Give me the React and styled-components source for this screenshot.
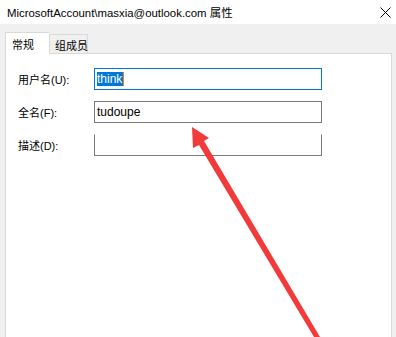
import styled, { createGlobalStyle } from "styled-components";

const GlobalStyle = createGlobalStyle`
  html, body {
    margin: 0;
    padding: 0;
    width: 396px;
    height: 337px;
    overflow: hidden;
    background: #f0f0f0;
    font-family: "Liberation Sans", "Noto Sans CJK SC", sans-serif;
    font-size: 12px;
    color: #000;
  }
`;

const Window = styled.div`
  position: relative;
  display: flex;
  flex-direction: column;
  width: 396px;
  height: 337px;
  overflow: hidden;
`;

const TitleBar = styled.div`
  display: flex;
  align-items: center;
  justify-content: space-between;
  height: 24px;
  padding: 0 4px 0 7px;
  background: #fff;
`;

const TitleText = styled.div`
  font-size: 11.4px;
  color: #000;
  white-space: nowrap;
`;

const Close = styled.div`
  width: 14px;
  height: 14px;
  display: flex;
  align-items: center;
  justify-content: center;
`;

const Body = styled.div`
  flex: 1;
  display: flex;
  flex-direction: column;
  padding: 8px 4px 0 5px;
`;

const Tabs = styled.div`
  display: flex;
  align-items: flex-end;
  height: 21px;
`;

const Tab = styled.div`
  box-sizing: border-box;
  height: ${(p) => (p.$active ? "22px" : "19px")};
  width: ${(p) => p.$w}px;
  padding: ${(p) => (p.$active ? "3px 0 0 6px" : "2px 0 0 5px")};
  background: ${(p) => (p.$active ? "#fff" : "#f0f0f0")};
  border: 1px solid #d9d9d9;
  border-bottom: none;
  border-right: ${(p) => (p.$active ? "none" : "1px solid #d9d9d9")};
  margin-bottom: ${(p) => (p.$active ? "-1px" : "0")};
  position: relative;
  z-index: ${(p) => (p.$active ? 1 : 0)};
  font-size: 11px;
  white-space: nowrap;
`;

const Panel = styled.div`
  flex: 1;
  background: #fff;
  border: 1px solid #d9d9d9;
  border-bottom: none;
  padding: 14px 0 0 12px;
  display: flex;
  flex-direction: column;
  gap: 11px;
`;

const Row = styled.div`
  display: flex;
  align-items: center;
`;

const Label = styled.div`
  width: 76px;
  font-size: 11px;
`;

const Field = styled.div`
  box-sizing: border-box;
  width: 228px;
  height: 22px;
  border: 1px solid ${(p) => (p.$focus ? "#0078d7" : "#7a7a7a")};
  border-top-color: ${(p) => (p.$noTop ? "transparent" : p.$focus ? "#0078d7" : "#7a7a7a")};
  padding: 0 2px;
  display: flex;
  align-items: center;
  font-size: 12px;
`;

const Selected = styled.span`
  background: #0078d7;
  color: #fff;
  border-right: 1px solid #f08000;
  padding-right: 1px;
`;

const Arrow = styled.svg`
  position: absolute;
  left: 0;
  top: 0;
  pointer-events: none;
`;

export default function App() {
  return (
    <Window>
      <GlobalStyle />
      <TitleBar>
        <TitleText>MicrosoftAccount\masxia@outlook.com 属性</TitleText>
        <Close>
          <svg width="11" height="11" viewBox="0 0 11 11">
            <path d="M0.5 0.5L10.5 10.5M10.5 0.5L0.5 10.5" stroke="#000" strokeWidth="1" />
          </svg>
        </Close>
      </TitleBar>
      <Body>
        <Tabs>
          <Tab $active $w={44}>常规</Tab>
          <Tab $w={39}>组成员</Tab>
        </Tabs>
        <Panel>
          <Row>
            <Label>用户名(U):</Label>
            <Field $focus>
              <Selected>think</Selected>
            </Field>
          </Row>
          <Row>
            <Label>全名(F):</Label>
            <Field>tudoupe</Field>
          </Row>
          <Row>
            <Label>描述(D):</Label>
            <Field $noTop />
          </Row>
        </Panel>
      </Body>
      <Arrow width="396" height="337" viewBox="0 0 396 337">
        <path
          d="M192 127 L209 138 L204 141 L320 337 L314 337 L199 145 L193 148 Z"
          fill="#f33a3a"
        />
      </Arrow>
    </Window>
  );
}
